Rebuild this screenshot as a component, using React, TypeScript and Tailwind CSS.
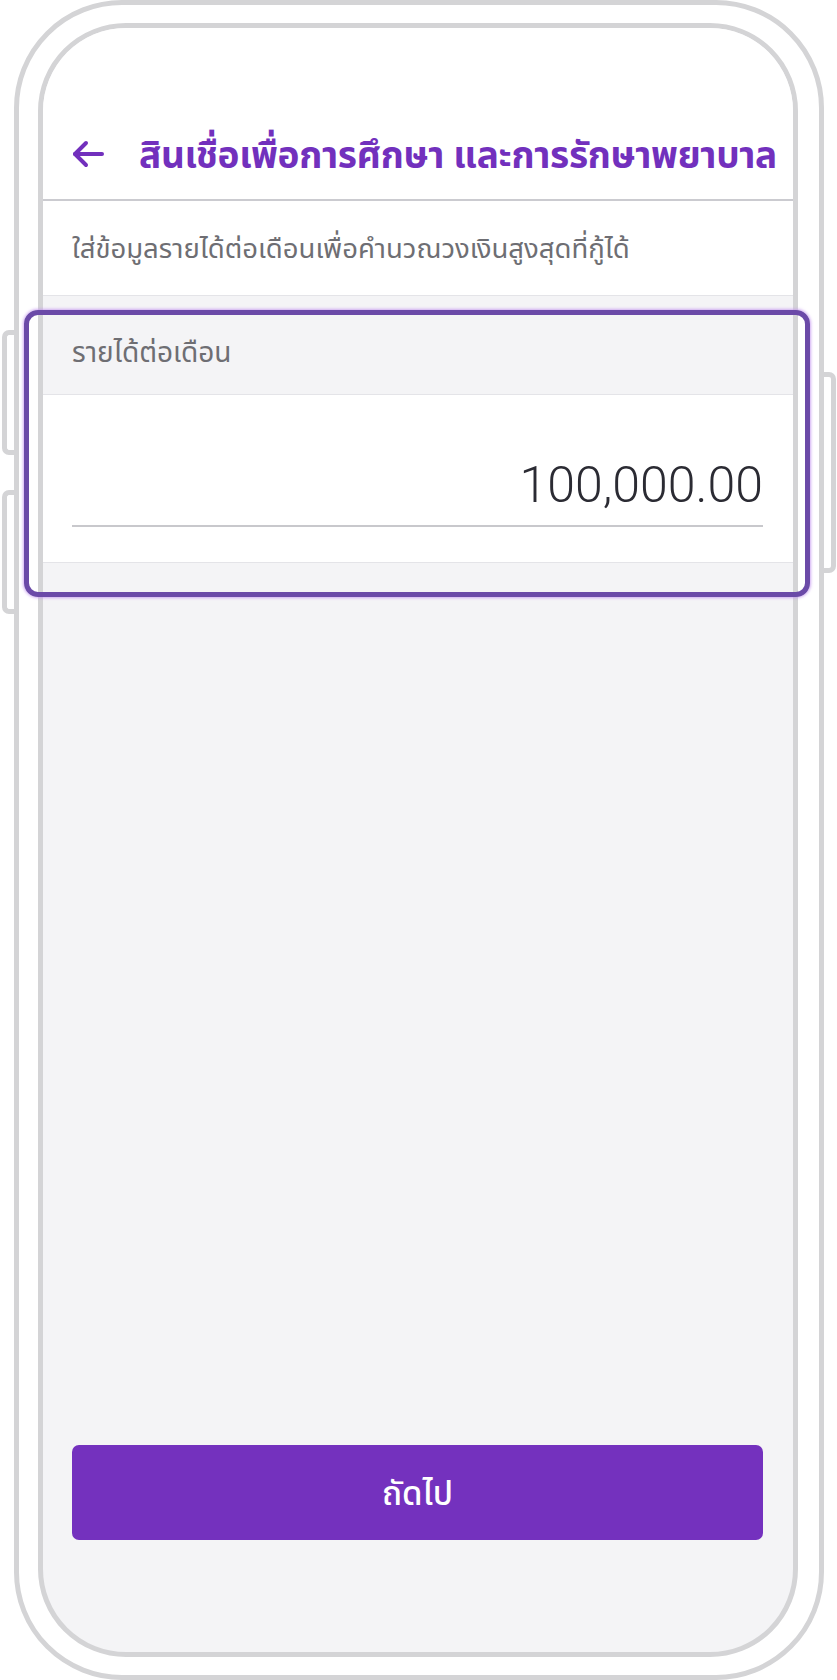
import React from "react";

function BackArrow() {
  return (
    <svg width="32" height="28" viewBox="0 0 32 28" fill="none">
      <path d="M3 14H30" stroke="#7230bd" strokeWidth="4" strokeLinecap="round" />
      <path d="M14 3L3 14L14 25" stroke="#7230bd" strokeWidth="4" strokeLinecap="round" strokeLinejoin="round" />
    </svg>
  );
}

export default function App() {
  const thai = { fontFamily: '"Noto Sans", "Noto Sans Thai", sans-serif' };
  return (
    <div className="relative w-[837px] h-[1680px] bg-white overflow-hidden" style={thai}>
      {/* side buttons */}
      <div className="absolute left-[2px] top-[330px] w-[14px] h-[125px] border-[5px] border-r-0 border-[#d4d4d6] rounded-l-[7px] bg-white" />
      <div className="absolute left-[2px] top-[490px] w-[14px] h-[124px] border-[5px] border-r-0 border-[#d4d4d6] rounded-l-[7px] bg-white" />
      <div className="absolute left-[822px] top-[372px] w-[14px] h-[201px] border-[5px] border-l-0 border-[#d4d4d6] rounded-r-[7px] bg-white" />

      {/* outer frame */}
      <div className="relative ml-[14px] w-[810px] h-[1680px] border-[5px] border-[#d4d4d6] rounded-[108px] bg-white">
        {/* inner frame */}
        <div className="ml-[19px] mt-[18px] w-[760px] h-[1634px] border-[5px] border-[#d4d4d6] rounded-[88px] overflow-hidden bg-[#f4f4f6] flex flex-col">
          {/* header */}
          <div className="h-[173px] bg-white border-b-2 border-[#cbcbd0] flex items-start pt-[99px] pl-[29px]">
            <div className="h-[54px] flex items-center">
              <BackArrow />
            </div>
            <div className="h-[54px] flex items-center ml-[35px] text-[#7230bd] text-[37px] font-bold whitespace-nowrap tracking-[-0.3px]">
              สินเชื่อเพื่อการศึกษา และการรักษาพยาบาล
            </div>
          </div>
          {/* description */}
          <div className="h-[95px] bg-white border-b border-[#e4e4e8] flex items-center pl-[29px] text-[27.5px] text-[#6e6e73] whitespace-nowrap">
            ใส่ข้อมูลรายได้ต่อเดือนเพื่อคำนวณวงเงินสูงสุดที่กู้ได้
          </div>
          {/* label */}
          <div className="h-[99px] border-b border-[#e4e4e8] pl-[29px] pt-[40px]">
            <div className="h-[30px] flex items-center text-[28px] text-[#6e6e73]">รายได้ต่อเดือน</div>
          </div>
          {/* value */}
          <div className="h-[168px] bg-white border-b border-[#e4e4e8] pl-[29px] pr-[30px] pt-[60px]">
            <div className="border-b-2 border-[#c8c8cc] h-[72px]">
              <div
                className="h-[60px] flex items-center justify-end text-[50px] font-light text-[#2b2b33]"
                style={{ fontFamily: 'Roboto, "Liberation Sans", sans-serif' }}
              >
                100,000.00
              </div>
            </div>
          </div>
          {/* button area */}
          <div className="flex-1 pl-[29px] pr-[30px] pt-[882px]">
            <button className="w-full h-[95px] rounded-[7px] bg-[#7431be] text-white text-[33px] font-medium flex items-center justify-center">
              ถัดไป
            </button>
          </div>
        </div>
      </div>

      {/* highlight box */}
      <div className="absolute left-[24px] top-[310px] w-[786px] h-[287px] border-[5px] border-[#6b4aa8] rounded-[14px] shadow-[0_0_3px_1px_rgba(196,150,240,0.8)]" />
    </div>
  );
}
